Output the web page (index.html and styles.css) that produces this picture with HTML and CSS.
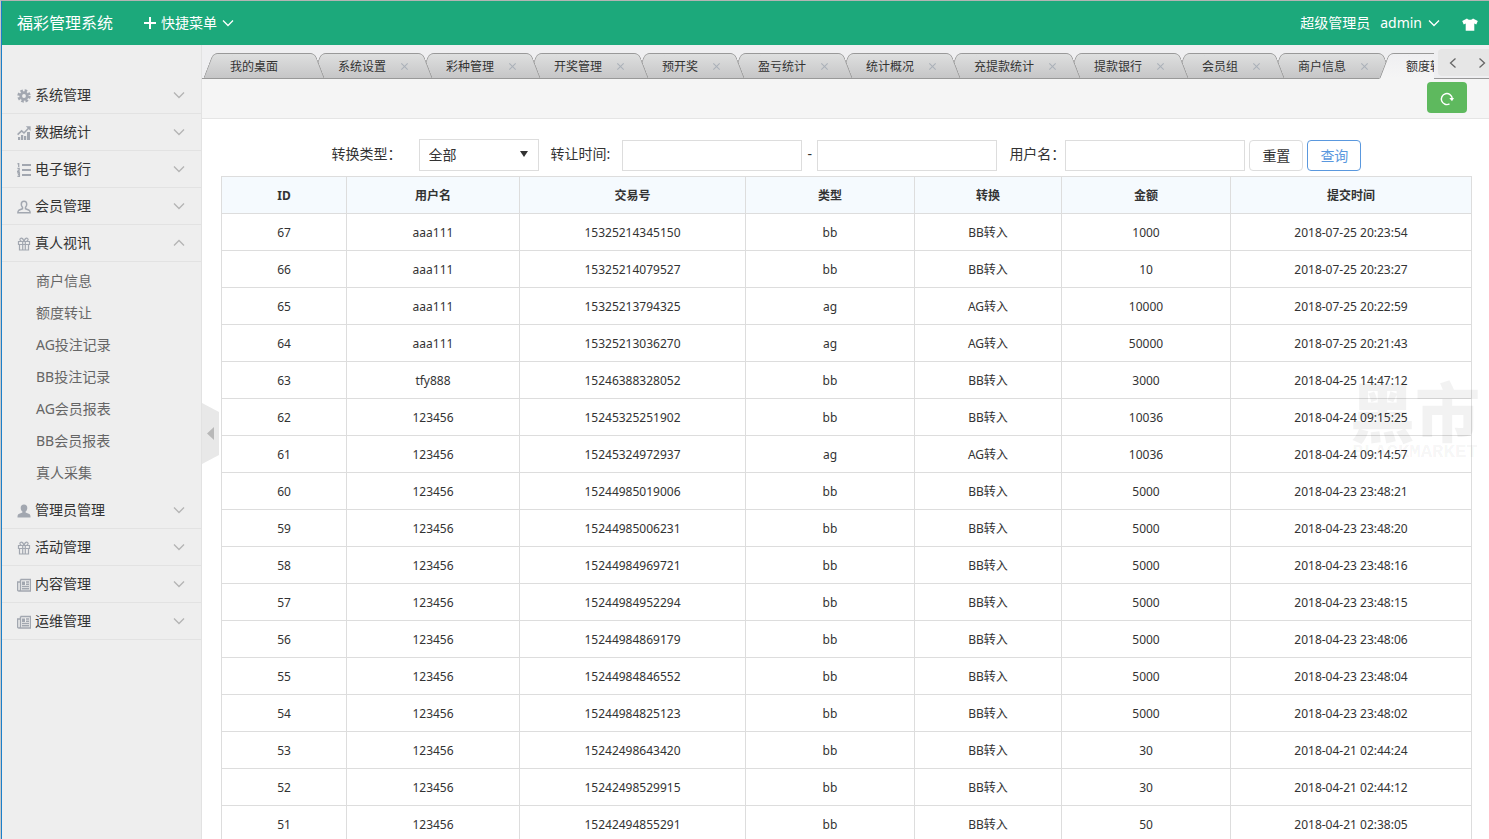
FILE: index.html
```html
<!DOCTYPE html>
<html lang="zh-CN">
<head>
<meta charset="utf-8">
<title>福彩管理系统</title>
<link rel="stylesheet" href="styles.css">
</head>
<body>
<svg class="sprite" aria-hidden="true">
  <symbol id="chev" viewBox="0 0 12 8"><path d="M1 1.5 6 6.5 11 1.5" fill="none" stroke="currentColor" stroke-width="1.3"/></symbol>
  <symbol id="gear" viewBox="0 0 14 14"><g fill="none" stroke="currentColor"><circle cx="7" cy="7" r="3.3" stroke-width="2.8"/><circle cx="7" cy="7" r="5.4" stroke-width="2.6" stroke-dasharray="2.5 1.74"/></g></symbol>
  <symbol id="chart" viewBox="0 0 14 14"><path d="M1 11h2.200v3H1zM4 9h2.200v5H4zM7 10h2.200v4H7zM10 6h3v8h-3z" fill="currentColor"/><path d="M.6 8.600 4.600 4.800 7 7 12 1.800" fill="none" stroke="currentColor" stroke-width="1.600"/><path d="M8.800.2h4.800V5z" fill="currentColor"/></symbol>
  <symbol id="list" viewBox="0 0 14 14"><path d="M5 2h9M5 7h9M5 12h9" stroke="currentColor" stroke-width="2"/><path d="M.4 1 1.700.5V4M.4 5.500h1.800v1.500L.5 8.500h2.200M.4 10h2v3.500h-2M.9 11.700h1.500" fill="none" stroke="currentColor" stroke-width="1.300"/></symbol>
  <symbol id="user-o" viewBox="0 0 14 14"><path d="M7 1.200c-1.900 0-2.700 1.300-2.700 3 0 1.400.5 2.400 1.200 3.100v1.500L1.800 10.300c-.7.4-.9 1.200-.9 2.500h12.200c0-1.300-.2-2.100-.9-2.500L8.500 8.800V7.300c.7-.7 1.200-1.700 1.200-3.100 0-1.700-.8-3-2.700-3z" fill="none" stroke="currentColor" stroke-width="1.500"/></symbol>
  <symbol id="user" viewBox="0 0 14 14"><path d="M7 .5C4.800.5 3.700 2 3.700 4c0 1.600.7 2.800 1.700 3.600v1L1.700 10C.7 10.500.5 11.500.5 13.500h13c0-2-.2-3-1.200-3.500L8.600 8.600v-1c1-.8 1.700-2 1.700-3.600C10.300 2 9.200.5 7 .5z" fill="currentColor"/></symbol>
  <symbol id="gift" viewBox="0 0 14 14"><path d="M1.500 4.500h11v3h-11zM2.500 7.500h9v5.500h-9zM5.700 4.500V13M8.300 4.500V13M7 4.300C6 1.500 4.800 1 3.800 1.300 2.400 1.800 2.800 4 4.600 4.300M7 4.300C8 1.500 9.200 1 10.200 1.300c1.400.5 1 2.700-.8 3" fill="none" stroke="currentColor" stroke-width="1.200"/></symbol>
  <symbol id="news" viewBox="0 0 14 14"><path d="M3.500 1.500h10v11.500H1.800C1 13 .6 12.500.6 11.800V4h2.900M3.500 1.500v10c0 .8-.5 1.500-1.200 1.500M5 8.500h7M5 10.700h7M9 4h3M9 6.200h3" fill="none" stroke="currentColor" stroke-width="1.400"/><path d="M5 3.500h3v3.500H5z" fill="currentColor"/></symbol>
</svg>
<div class="app">
  <header class="topbar">
    <a class="brand" href="#">福彩管理系统</a>
    <button class="top-link quick" type="button">
      <svg width="12" height="12" viewBox="0 0 12 12" aria-hidden="true"><path d="M6 0v12M0 6h12" stroke="currentColor" stroke-width="2"/></svg>
      <span>快捷菜单</span>
      <svg width="12" height="8" aria-hidden="true"><use href="#chev"/></svg>
    </button>
    <div class="account">
      <span>超级管理员</span>
      <button class="top-link" type="button">admin <svg width="12" height="8" aria-hidden="true"><use href="#chev"/></svg></button>
      <button class="skin" type="button" aria-label="换肤"><svg width="16" height="13" viewBox="0 0 16 13"><path d="M5 .5C6 2.300 10 2.300 11 .5L15.800 3 14.300 6.400 12.300 5.600V12.800H3.700V5.600L1.700 6.400.2 3z" fill="currentColor"/></svg></button>
    </div>
  </header>
  <div class="body">
    <aside class="sidebar">
      <nav>
        <button class="menu" type="button"><svg class="ico"><use href="#gear"/></svg>系统管理<svg class="arrow"><use href="#chev"/></svg></button>
        <button class="menu" type="button"><svg class="ico"><use href="#chart"/></svg>数据统计<svg class="arrow"><use href="#chev"/></svg></button>
        <button class="menu" type="button"><svg class="ico"><use href="#list"/></svg>电子银行<svg class="arrow"><use href="#chev"/></svg></button>
        <button class="menu" type="button"><svg class="ico"><use href="#user-o"/></svg>会员管理<svg class="arrow"><use href="#chev"/></svg></button>
        <button class="menu open" type="button" aria-expanded="true"><svg class="ico"><use href="#gift"/></svg>真人视讯<svg class="arrow"><use href="#chev"/></svg></button>
        <ul class="submenu">
          <li><a href="#">商户信息</a></li>
          <li><a href="#">额度转让</a></li>
          <li><a href="#">AG投注记录</a></li>
          <li><a href="#">BB投注记录</a></li>
          <li><a href="#">AG会员报表</a></li>
          <li><a href="#">BB会员报表</a></li>
          <li><a href="#">真人采集</a></li>
        </ul>
        <button class="menu" type="button"><svg class="ico"><use href="#user"/></svg>管理员管理<svg class="arrow"><use href="#chev"/></svg></button>
        <button class="menu" type="button"><svg class="ico"><use href="#gift"/></svg>活动管理<svg class="arrow"><use href="#chev"/></svg></button>
        <button class="menu" type="button"><svg class="ico"><use href="#news"/></svg>内容管理<svg class="arrow"><use href="#chev"/></svg></button>
        <button class="menu" type="button"><svg class="ico"><use href="#news"/></svg>运维管理<svg class="arrow"><use href="#chev"/></svg></button>
      </nav>
      <button class="collapse" type="button" aria-label="收起菜单"><svg width="17" height="61" viewBox="0 0 17 61"><path d="M0 0 17 9V52L0 61z" fill="#e8e8e8"/><path d="M12 24V37L5 30.500z" fill="#b8b8b8"/></svg></button>
    </aside>
    <main class="main">
      <div class="tabbar">
        <ul class="tabs">
          <li class="tab"><a href="#">我的桌面</a></li>
          <li class="tab"><a href="#">系统设置</a><button type="button" aria-label="关闭"></button></li>
          <li class="tab"><a href="#">彩种管理</a><button type="button" aria-label="关闭"></button></li>
          <li class="tab"><a href="#">开奖管理</a><button type="button" aria-label="关闭"></button></li>
          <li class="tab"><a href="#">预开奖</a><button type="button" aria-label="关闭"></button></li>
          <li class="tab"><a href="#">盈亏统计</a><button type="button" aria-label="关闭"></button></li>
          <li class="tab"><a href="#">统计概况</a><button type="button" aria-label="关闭"></button></li>
          <li class="tab"><a href="#">充提款统计</a><button type="button" aria-label="关闭"></button></li>
          <li class="tab"><a href="#">提款银行</a><button type="button" aria-label="关闭"></button></li>
          <li class="tab"><a href="#">会员组</a><button type="button" aria-label="关闭"></button></li>
          <li class="tab"><a href="#">商户信息</a><button type="button" aria-label="关闭"></button></li>
          <li class="tab active"><a href="#">额度转让</a><button type="button" aria-label="关闭"></button></li>
        </ul>
        <div class="tab-nav">
          <button type="button" aria-label="向左"><svg width="8" height="12" viewBox="0 0 8 12"><path d="M6.500 1.500 1.500 6l5 4.500" fill="none" stroke="currentColor" stroke-width="1.300"/></svg></button>
          <button type="button" aria-label="向右"><svg width="8" height="12" viewBox="0 0 8 12"><path d="M1.500 1.500 6.500 6l-5 4.500" fill="none" stroke="currentColor" stroke-width="1.300"/></svg></button>
        </div>
      </div>
      <div class="toolbar">
        <button class="refresh" type="button" aria-label="刷新"><svg width="14" height="14" viewBox="0 0 14 14"><path d="M9.500 11.900A5.500 5.500 0 1 1 12.300 6.500" fill="none" stroke="currentColor" stroke-width="1.400"/><path d="M9.300 6h4.700l-2 3.300z" fill="currentColor"/></svg></button>
      </div>
      <div class="content">
        <form class="filter">
          <label class="lb-type" for="type">转换类型：</label>
          <span class="select"><select id="type"><option>全部</option></select></span>
          <label class="lb-time" for="from">转让时间:</label>
          <input id="from" type="text">
          <span class="dash">-</span>
          <input id="to" type="text" aria-label="结束时间">
          <label class="lb-user" for="user-name">用户名：</label>
          <input id="user-name" type="text">
          <button class="btn" type="reset">重置</button>
          <button class="btn primary" type="button">查询</button>
        </form>
        <table class="grid">
          <colgroup><col class="c1"><col class="c2"><col class="c3"><col class="c4"><col class="c5"><col class="c6"><col class="c7"></colgroup>
          <thead><tr><th>ID</th><th>用户名</th><th>交易号</th><th>类型</th><th>转换</th><th>金额</th><th>提交时间</th></tr></thead>
          <tbody>
            <tr><td>67</td><td>aaa111</td><td>15325214345150</td><td>bb</td><td>BB转入</td><td>1000</td><td>2018-07-25 20:23:54</td></tr>
            <tr><td>66</td><td>aaa111</td><td>15325214079527</td><td>bb</td><td>BB转入</td><td>10</td><td>2018-07-25 20:23:27</td></tr>
            <tr><td>65</td><td>aaa111</td><td>15325213794325</td><td>ag</td><td>AG转入</td><td>10000</td><td>2018-07-25 20:22:59</td></tr>
            <tr><td>64</td><td>aaa111</td><td>15325213036270</td><td>ag</td><td>AG转入</td><td>50000</td><td>2018-07-25 20:21:43</td></tr>
            <tr><td>63</td><td>tfy888</td><td>15246388328052</td><td>bb</td><td>BB转入</td><td>3000</td><td>2018-04-25 14:47:12</td></tr>
            <tr><td>62</td><td>123456</td><td>15245325251902</td><td>bb</td><td>BB转入</td><td>10036</td><td>2018-04-24 09:15:25</td></tr>
            <tr><td>61</td><td>123456</td><td>15245324972937</td><td>ag</td><td>AG转入</td><td>10036</td><td>2018-04-24 09:14:57</td></tr>
            <tr><td>60</td><td>123456</td><td>15244985019006</td><td>bb</td><td>BB转入</td><td>5000</td><td>2018-04-23 23:48:21</td></tr>
            <tr><td>59</td><td>123456</td><td>15244985006231</td><td>bb</td><td>BB转入</td><td>5000</td><td>2018-04-23 23:48:20</td></tr>
            <tr><td>58</td><td>123456</td><td>15244984969721</td><td>bb</td><td>BB转入</td><td>5000</td><td>2018-04-23 23:48:16</td></tr>
            <tr><td>57</td><td>123456</td><td>15244984952294</td><td>bb</td><td>BB转入</td><td>5000</td><td>2018-04-23 23:48:15</td></tr>
            <tr><td>56</td><td>123456</td><td>15244984869179</td><td>bb</td><td>BB转入</td><td>5000</td><td>2018-04-23 23:48:06</td></tr>
            <tr><td>55</td><td>123456</td><td>15244984846552</td><td>bb</td><td>BB转入</td><td>5000</td><td>2018-04-23 23:48:04</td></tr>
            <tr><td>54</td><td>123456</td><td>15244984825123</td><td>bb</td><td>BB转入</td><td>5000</td><td>2018-04-23 23:48:02</td></tr>
            <tr><td>53</td><td>123456</td><td>15242498643420</td><td>bb</td><td>BB转入</td><td>30</td><td>2018-04-21 02:44:24</td></tr>
            <tr><td>52</td><td>123456</td><td>15242498529915</td><td>bb</td><td>BB转入</td><td>30</td><td>2018-04-21 02:44:12</td></tr>
            <tr><td>51</td><td>123456</td><td>15242494855291</td><td>bb</td><td>BB转入</td><td>50</td><td>2018-04-21 02:38:05</td></tr>
          </tbody>
        </table>
      </div>
      <div class="watermark" aria-hidden="true"><div class="wm-main">黑市</div><div class="wm-sub">BLACKMARKET</div></div>
    </main>
  </div>
</div>
</body>
</html>
```

FILE: styles.css
```css
* { box-sizing: border-box; }
body {
  margin: 0;
  font: 14px/20px "Noto Sans", "Noto Sans CJK SC", sans-serif;
  color: #333;
  background: #fff;
}
button, input, select { font: inherit; color: inherit; margin: 0; }
button { background: none; border: 0; padding: 0; cursor: pointer; }
a { color: inherit; text-decoration: none; }
ul { list-style: none; margin: 0; padding: 0; }
.sprite { position: absolute; width: 0; height: 0; }

.app {
  height: 100vh;
  display: flex;
  flex-direction: column;
  overflow: hidden;
  border-top: 1px solid #b4b4b4;
  border-left: 1px solid #c8c8c8;
}

/* Header */
.topbar {
  flex: none;
  height: 44px;
  display: flex;
  align-items: center;
  padding: 0 11px 0 15px;
  color: #fff;
  background: #1ca97b;
  border-left: 1px solid #1c7fc9;
}
.brand { font-size: 16px; }
.top-link { display: flex; align-items: center; gap: 6px; }
.quick { margin-left: 31px; gap: 5px; }
.account { margin-left: auto; display: flex; align-items: center; gap: 10px; }
.skin { margin-left: 12px; display: flex; padding-top: 3px; }

.body { flex: 1; min-height: 0; display: flex; }

/* Sidebar */
.sidebar {
  position: relative;
  flex: none;
  width: 201px;
  padding-top: 32px;
  background: #eee;
  border-left: 1px solid #1c7fc9;
  border-right: 1px solid #e2e2e2;
}
.menu {
  width: 100%;
  height: 37px;
  display: flex;
  align-items: center;
  padding: 0 16px 0 15px;
  border-bottom: 1px solid #e2e2e2;
}
.ico { width: 14px; height: 14px; margin: 2px 4px 0 0; color: #a2a7b0; }
.arrow { width: 12px; height: 8px; margin-left: auto; color: #b4b4b4; }
.open .arrow { transform: rotate(180deg); }
.submenu { padding: 3px 0; color: #666; }
.submenu a { display: block; padding: 6px 0 6px 34px; }
.collapse { position: absolute; left: 200px; top: 358px; z-index: 3; display: flex; }

/* Tabs */
.main { position: relative; flex: 1; min-width: 0; display: flex; flex-direction: column; }
.tabbar {
  flex: none;
  height: 34px;
  display: flex;
  background: #efeff1;
  box-shadow: inset 0 -1px #999;
}
.tabs {
  flex: 1;
  min-width: 0;
  display: flex;
  overflow: hidden;
  padding: 8px 0 0 4px;
  font-size: 12px;
}
.tab {
  position: relative;
  z-index: 0;
  flex: none;
  height: 26px;
  display: flex;
  align-items: center;
  padding: 1px 0 0 24px;
  width: 114px;
  margin-right: -6px;
}
.tab:nth-child(5), .tab:nth-child(10) { width: 102px; }
.tab:nth-child(8) { width: 126px; }
.tab:nth-child(1) { z-index: 12; }
.tab:nth-child(2) { z-index: 11; }
.tab:nth-child(3) { z-index: 10; }
.tab:nth-child(4) { z-index: 9; }
.tab:nth-child(5) { z-index: 8; }
.tab:nth-child(6) { z-index: 7; }
.tab:nth-child(7) { z-index: 6; }
.tab:nth-child(8) { z-index: 5; }
.tab:nth-child(9) { z-index: 4; }
.tab:nth-child(10) { z-index: 3; }
.tab:nth-child(11) { z-index: 2; }
.tab:nth-child(12) { z-index: 13; }
.tab::before, .tab::after {
  content: "";
  position: absolute;
  z-index: -1;
  top: 0;
  bottom: 0;
  border: 1px solid #999;
  background: linear-gradient(#dedfdf, #c6c6c7);
}
.tab::before {
  left: 2px;
  right: 30px;
  border-right: 0;
  border-top-left-radius: 5px;
  transform: skewX(-21deg);
}
.tab::after {
  left: 30px;
  right: 0;
  border-left: 0;
  border-top-right-radius: 5px;
  transform: skewX(21deg);
}
.tab.active::before, .tab.active::after { background: linear-gradient(#efeff1, #f5f5f5); border-bottom-color: #f5f5f5; }
.tab button { position: relative; width: 9px; height: 9px; margin-left: 14px; }
.tab button::before, .tab button::after {
  content: "";
  position: absolute;
  left: 0;
  right: 0;
  top: 4px;
  height: 1px;
  background: #a9b0b8;
  transform: rotate(45deg);
}
.tab button::after { transform: rotate(-45deg); }
.tab-nav {
  flex: none;
  width: 51px;
  height: 27px;
  margin: 4px 0 0 4px;
  display: flex;
  align-items: center;
  justify-content: space-between;
  padding: 0 3px 0 11px;
  background: #e6e6e6;
  border-radius: 4px 0 0 4px;
  color: #666;
}
.tab-nav button { display: flex; }

.toolbar {
  flex: none;
  height: 40px;
  display: flex;
  justify-content: flex-end;
  align-items: flex-start;
  padding: 3px 22px 0;
  background: #f5f5f5;
  border-bottom: 1px solid #e5e5e5;
}
.refresh {
  width: 40px;
  height: 31px;
  display: flex;
  align-items: center;
  justify-content: center;
  padding-top: 3px;
  color: #fff;
  background: #5eb95e;
  border-radius: 4px;
}

/* Filter and table */
.content { flex: 1; min-height: 0; overflow-y: auto; scrollbar-width: none; padding: 20px 17px 0 19px; }
.filter { display: flex; align-items: center; justify-content: center; height: 32px; margin-bottom: 5px; }
.filter label { padding-bottom: 2px; white-space: nowrap; }
.filter input { width: 180px; height: 31px; padding: 0 8px; border: 1px solid #ddd; background: #fff; }
.select { position: relative; display: flex; }
.select::after {
  content: "";
  position: absolute;
  right: 11px;
  top: 12px;
  border: solid transparent;
  border-width: 6px 4px 0;
  border-top-color: #333;
}
.select select { width: 120px; height: 32px; padding: 0 9px; border: 1px solid #ddd; border-radius: 0; background: #fff; appearance: none; }
.lb-type { margin-right: 17px; }
.lb-time { margin: 0 12px; }
.lb-user { margin-left: 12px; }
.dash { width: 15px; text-align: center; padding-bottom: 2px; }
.btn { width: 54px; height: 31px; margin-left: 4px; padding-top: 1px; border: 1px solid #ddd; border-radius: 4px; }
.btn.primary { color: #5a98de; border-color: #5a98de; }

.grid { width: 100%; border-collapse: collapse; table-layout: fixed; font-size: 12px; text-align: center; }
.grid th, .grid td { height: 37px; padding: 9px 4px 7px; line-height: 20px; border: 1px solid #ddd; }
.grid th { background: #f5fafe; font-weight: 700; }
.c1 { width: 10%; }
.c2 { width: 13.84%; }
.c3 { width: 18.08%; }
.c4 { width: 13.52%; }
.c5 { width: 11.76%; }
.c6 { width: 13.52%; }
.c7 { width: 19.28%; }

.watermark {
  position: absolute;
  right: 9px;
  top: 336px;
  width: 130px;
  text-align: center;
  color: rgba(0, 0, 0, 0.05);
  font-weight: 900;
  pointer-events: none;
}
.wm-main { font-size: 65px; line-height: 62px; }
.wm-sub { font: 700 19px/18px "Liberation Mono", monospace; }
```
